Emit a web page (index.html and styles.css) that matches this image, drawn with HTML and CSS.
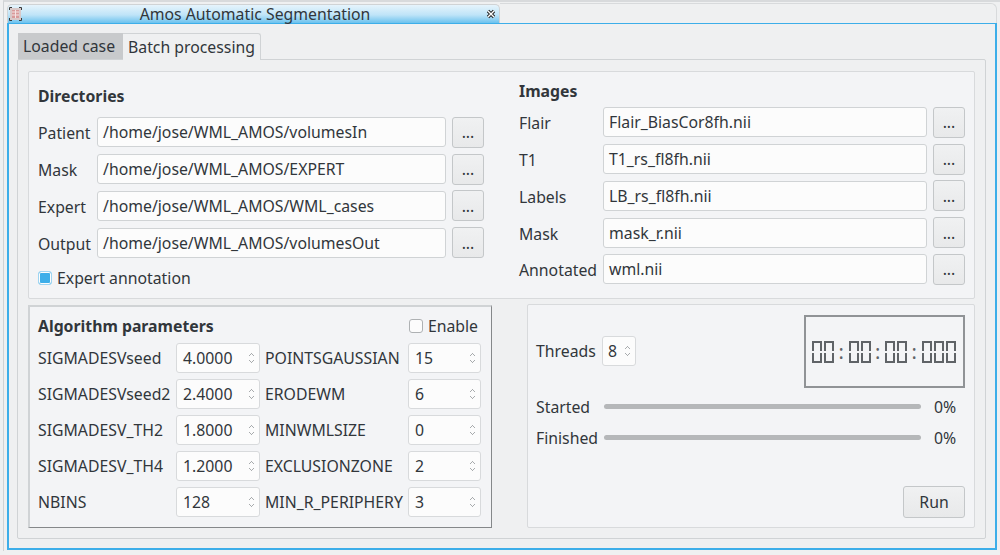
FILE: index.html
```html
<!DOCTYPE html>
<html lang="en">
<head>
  <meta charset="UTF-8">
  <title>Amos Automatic Segmentation</title>
  <link rel="stylesheet" href="styles.css">
</head>
<body>
  <div class="frame">
    <!-- Dock title tab -->
    <div class="tabstrip">
      <div class="titlebar">
        <svg class="app-icon" width="13" height="14" viewBox="0 0 13 14">
          <rect x="1" y="1" width="11" height="12" fill="#d8c8c8"/>
          <rect x="3" y="3" width="7" height="8" fill="#d99a9a"/>
          <path d="M3 5h7M3 8h7M6.5 3v8" stroke="#f4e4e4"/>
          <path d="M0.5 3V0.5H3M10 0.5h2.5V3M0.5 11v2.5H3M10 13.5h2.5V11" stroke="#3a3a3a" fill="none"/>
        </svg>
        <span class="title">Amos Automatic Segmentation</span>
        <svg class="close-icon" width="10" height="10" viewBox="0 0 10 10">
          <path d="M2 2l6 6M8 2l-6 6" stroke="#222" stroke-width="3.2"/>
          <path d="M2 2l6 6M8 2l-6 6" stroke="#fff" stroke-width="1.4"/>
        </svg>
      </div>
      <div class="strip-rest"></div>
    </div>

    <div class="dock">
      <div class="tabs">
        <div class="tab">Loaded case</div>
        <div class="tab active">Batch processing</div>
      </div>

      <div class="pane">
        <!-- Directories and images -->
        <div class="panel top-panel">
          <div class="col dirs">
            <h3>Directories</h3>
            <div class="file-row"><label>Patient</label><div class="field">/home/jose/WML_AMOS/volumesIn</div><button>...</button></div>
            <div class="file-row"><label>Mask</label><div class="field">/home/jose/WML_AMOS/EXPERT</div><button>...</button></div>
            <div class="file-row"><label>Expert</label><div class="field">/home/jose/WML_AMOS/WML_cases</div><button>...</button></div>
            <div class="file-row"><label>Output</label><div class="field">/home/jose/WML_AMOS/volumesOut</div><button>...</button></div>
            <div class="check-row"><span class="check on"></span>Expert annotation</div>
          </div>
          <div class="col images">
            <h3>Images</h3>
            <div class="file-row"><label>Flair</label><div class="field">Flair_BiasCor8fh.nii</div><button>...</button></div>
            <div class="file-row"><label>T1</label><div class="field">T1_rs_fl8fh.nii</div><button>...</button></div>
            <div class="file-row"><label>Labels</label><div class="field">LB_rs_fl8fh.nii</div><button>...</button></div>
            <div class="file-row"><label>Mask</label><div class="field">mask_r.nii</div><button>...</button></div>
            <div class="file-row"><label>Annotated</label><div class="field">wml.nii</div><button>...</button></div>
          </div>
        </div>

        <div class="bottom">
          <!-- Algorithm parameters -->
          <div class="params">
            <div class="params-head">
              <h3>Algorithm parameters</h3>
              <div class="enable"><span class="check"></span>Enable</div>
            </div>
            <div class="param-grid">
              <label>SIGMADESVseed</label><div class="spin">4.0000<i></i></div>
              <label class="second">POINTSGAUSSIAN</label><div class="spin">15<i></i></div>
              <label>SIGMADESVseed2</label><div class="spin">2.4000<i></i></div>
              <label class="second">ERODEWM</label><div class="spin">6<i></i></div>
              <label>SIGMADESV_TH2</label><div class="spin">1.8000<i></i></div>
              <label class="second">MINWMLSIZE</label><div class="spin">0<i></i></div>
              <label>SIGMADESV_TH4</label><div class="spin">1.2000<i></i></div>
              <label class="second">EXCLUSIONZONE</label><div class="spin">2<i></i></div>
              <label>NBINS</label><div class="spin">128<i></i></div>
              <label class="second">MIN_R_PERIPHERY</label><div class="spin">3<i></i></div>
            </div>
          </div>

          <!-- Run panel -->
          <div class="panel run-panel">
            <div class="run-top">
              <div class="threads"><label>Threads</label><div class="spin small">8<i></i></div></div>
              <div class="lcd" role="img" aria-label="00:00:00:000">
                <b></b><b></b><span>:</span><b></b><b></b><span>:</span><b></b><b></b><span>:</span><b></b><b></b><b></b>
              </div>
            </div>
            <div class="progress-row first"><label>Started</label><div class="bar"></div><span>0%</span></div>
            <div class="progress-row"><label>Finished</label><div class="bar"></div><span>0%</span></div>
            <div class="run-row"><button class="run">Run</button></div>
          </div>
        </div>
      </div>
    </div>
  </div>
</body>
</html>
```

FILE: styles.css
```css
/* Base */
html, body {
  margin: 0;
  height: 555px;
  overflow: hidden;
}

body {
  font-family: "Noto Sans", sans-serif;
  font-size: 15.8px;
  color: #31363b;
  background-color: #eff0f1;
}

* {
  box-sizing: border-box;
}

h3 {
  margin: 0;
  font-size: 15.8px;
  font-weight: bold;
}

/* Outer frame */
.frame {
  height: 551px;
  margin-left: 3px;
  padding: 2px 3px 0 3px;
  border-top: 2px solid #d8dadc;
  border-left: 1px solid #d0d3d5;
}

/* Title tab and the empty strip beside it */
.tabstrip {
  display: flex;
  height: 19px;
}

.titlebar {
  display: flex;
  align-items: center;
  width: 493px;
  padding: 0 3px 0 1px;
  border-radius: 5px 5px 0 0;
  border: 1px solid #d0d3d5;
  border-bottom: none;
  background: linear-gradient(#e6f4fc, #bfe4f8 55%, #6cc2ee);
}

.title {
  flex: 1;
  padding-left: 2px;
  text-align: center;
  line-height: 18px;
}

.strip-rest {
  flex: 1;
  margin-top: -1px;
  border: 1px solid #d8dadc;
  border-left: none;
  border-bottom: none;
  border-radius: 0 6px 0 0;
}

/* Dock body */
.dock {
  height: 527px;
  padding: 9px 9px 0 8px;
  border: 2px solid #3daee9;
  border-top-width: 1px;
  background-color: #eff0f1;
}

.tabs {
  display: flex;
  height: 26px;
  padding-left: 1px;
}

.tab {
  height: 26px;
  width: 105px;
  padding-left: 5px;
  line-height: 26px;
  white-space: nowrap;
  background-color: #c8cacc;
}

.tab.active {
  width: 138px;
  height: 27px;
  border: 1px solid #d0d3d5;
  border-left: none;
  border-bottom: none;
  border-radius: 0 3px 0 0;
  background-color: #eff0f1;
  position: relative;
}

.pane {
  height: 480px;
  padding: 11px 10px 0 10px;
  border: 1px solid #d0d3d5;
  border-radius: 2px;
}

/* Group boxes */
.panel {
  border: 1px solid #d8dadc;
  border-radius: 2px;
  background-color: #f3f4f6;
}

.top-panel {
  display: flex;
  height: 228px;
}

.col {
  display: flex;
  flex-direction: column;
}

.dirs {
  width: 481px;
  padding: 14px 0 0 9px;
}

.dirs h3 {
  height: 28px;
  line-height: 20px;
}

.images {
  flex: 1;
  padding: 9px 0 0 9px;
}

.images h3 {
  height: 23px;
  line-height: 20px;
}

.file-row {
  display: flex;
  align-items: center;
  height: 36.75px;
}

.file-row label {
  width: 59px;
  padding-top: 2px;
}

.images .file-row label {
  width: 84px;
  white-space: nowrap;
}

.field {
  width: 349px;
  height: 30px;
  padding: 0 5px;
  line-height: 28px;
  background-color: #fcfcfc;
  border: 1px solid #d0d3d5;
  border-radius: 3px;
}

.images .field {
  width: 324px;
}

button {
  width: 32px;
  height: 31px;
  margin-left: 6px;
  padding: 0;
  font: inherit;
  color: #31363b;
  background: linear-gradient(#f0f1f2, #e8e9ea);
  border: 1px solid #c4c7c9;
  border-radius: 3px;
}

.check-row {
  display: flex;
  align-items: center;
  height: 34px;
}

.check {
  width: 14px;
  height: 14px;
  margin-right: 5px;
  border: 1px solid #aeb1b3;
  border-radius: 3px;
  background-color: #fcfcfc;
}

.check.on {
  border-color: #9fd5f2;
  background-color: #3daee9;
  box-shadow: inset 0 0 0 1px #fcfcfc;
}

/* Bottom row */
.bottom {
  display: flex;
  margin-top: 5px;
  height: 224px;
}

.params {
  width: 464px;
  margin-top: 1px;
  padding: 9px 9px 0 8px;
  border: 2px solid #d0d3d5;
  border-right: 1px solid #85888a;
  border-bottom: 1px solid #85888a;
  background-color: #f3f4f6;
}

.params-head {
  display: flex;
  justify-content: space-between;
  align-items: center;
  height: 20px;
  padding-right: 4px;
}

.enable {
  display: flex;
  align-items: center;
}

.param-grid {
  display: grid;
  grid-template-columns: 138px 84px 148px 73px;
  grid-auto-rows: 36px;
  align-items: center;
  margin-top: 4px;
}

.param-grid .second {
  padding-left: 5px;
  white-space: nowrap;
}

.spin {
  position: relative;
  height: 30px;
  padding: 0 6px;
  line-height: 28px;
  background-color: #fcfcfc;
  border: 1px solid #d8dadc;
  border-radius: 3px;
}

/* up and down chevrons */
.spin i {
  position: absolute;
  right: 3px;
  top: 7px;
  width: 9px;
  height: 14px;
  background:
    linear-gradient(135deg, transparent 62%, #a8abad 62%, #a8abad 75%, transparent 75%) 0 0 / 5px 5px no-repeat,
    linear-gradient(225deg, transparent 62%, #a8abad 62%, #a8abad 75%, transparent 75%) 4px 0 / 5px 5px no-repeat,
    linear-gradient(45deg, transparent 62%, #a8abad 62%, #a8abad 75%, transparent 75%) 0 9px / 5px 5px no-repeat,
    linear-gradient(315deg, transparent 62%, #a8abad 62%, #a8abad 75%, transparent 75%) 4px 9px / 5px 5px no-repeat;
}

.spin.small {
  width: 34px;
  padding: 0 5px;
}

/* Run panel */
.run-panel {
  width: 448px;
  margin-left: 35px;
  padding: 10px 9px 0 8px;
}

.run-top {
  display: flex;
  justify-content: space-between;
  align-items: center;
  height: 73px;
}

.threads {
  display: flex;
  align-items: center;
  padding-bottom: 1px;
}

.threads label {
  width: 66px;
}

.lcd {
  display: flex;
  align-items: center;
  gap: 2px;
  width: 161px;
  height: 73px;
  padding-left: 6px;
  border: 2px solid #909396;
}

.lcd b {
  position: relative;
  width: 10px;
  height: 22px;
  border: 2px solid #5f6367;
}

/* notch between the upper and lower segments */
.lcd b::before,
.lcd b::after {
  content: "";
  position: absolute;
  top: 8px;
  width: 2px;
  height: 2px;
  background-color: #f3f4f6;
}

.lcd b::before {
  left: -2px;
}

.lcd b::after {
  right: -2px;
}

.lcd span {
  width: 10.5px;
  text-align: center;
  font-size: 20px;
  line-height: 22px;
  color: #5f6367;
}

.progress-row {
  display: flex;
  align-items: center;
  height: 31px;
}

.progress-row.first {
  margin-top: 3px;
}

.progress-row label {
  width: 68px;
}

.bar {
  width: 317px;
  height: 5px;
  border-radius: 3px;
  background-color: #b5b7b9;
}

.progress-row span {
  margin-left: 13px;
}

.run-row {
  display: flex;
  justify-content: flex-end;
  margin-top: 33px;
}

.run {
  width: 62px;
  height: 32px;
}
```
